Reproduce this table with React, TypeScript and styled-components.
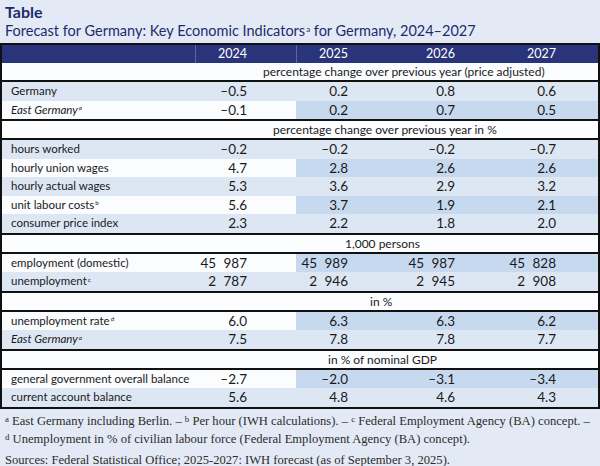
import React from "react";
import styled, { createGlobalStyle } from "styled-components";

const Global = createGlobalStyle`
  html, body { margin: 0; padding: 0; background: #e3eaf5; }
  body { font-family: Lato, "Open Sans", sans-serif; }
`;

const Page = styled.div`
  width: 600px;
  height: 466px;
  box-sizing: border-box;
  background: #e3eaf5;
  overflow: hidden;
`;

const Title = styled.h1`
  margin: 0;
  padding: 3px 0 0 5px;
  font: 700 16px/18px Lato, sans-serif;
  color: #1d2a6c;
`;

const Subtitle = styled.h2`
  margin: 0;
  padding: 1px 0 0 5px;
  font: 400 14.5px/18px Lato, sans-serif;
  color: #1d2a6c;
`;

const Sup = styled.sup`
  font-size: 0.55em;
  line-height: 0;
  vertical-align: 0.55em;
  margin-left: 1px;
`;

const NoteSup = styled.sup`
  font-size: 0.7em;
  line-height: 0;
  vertical-align: 0.35em;
`;

const Table = styled.div`
  margin-top: 3px;
  width: 600px;
  box-sizing: border-box;
  border: 2px solid #111;
`;

const cols = "193px 101px 101px 101px 1fr";

const HeadRow = styled.div`
  display: grid;
  grid-template-columns: ${cols};
  height: 18px;
  background: #2a347a;
  color: #fff;
  font: 400 12.5px/18px Lato, sans-serif;
`;

const HeadCell = styled.div<{ $pad: number; $sep?: boolean }>`
  text-align: right;
  padding-right: ${(p) => p.$pad}px;
  border-left: ${(p) => (p.$sep ? "1px solid #5b659e" : "none")};
`;

const SectionRow = styled.div<{ $indent: number; $top: boolean }>`
  height: 17px;
  background: #fcfdff;
  border-top: ${(p) => (p.$top ? "2px solid #111" : "none")};
  border-bottom: 2px solid #111;
  padding-left: ${(p) => p.$indent}px;
  font: 400 12px/17px Lato, sans-serif;
  color: #1a1a1a;
`;

type Tone = "light" | "dark";

const DataRow = styled.div<{ $tone: Tone }>`
  display: grid;
  grid-template-columns: ${cols};
  height: 18.5px;
  background: ${(p) => (p.$tone === "light" ? "#dde7f4" : "#fbfcfe")};
  color: #1a1a1a;
`;

const LabelCell = styled.div<{ $italic?: boolean }>`
  padding-left: 9px;
  font: ${(p) => (p.$italic ? "italic" : "normal")} 400 11.5px/18.5px Lato, sans-serif;
  white-space: nowrap;
`;

const ValueCell = styled.div<{ $pad: number; $shade: boolean }>`
  text-align: right;
  padding-right: ${(p) => p.$pad}px;
  background: ${(p) => (p.$shade ? "#c6d9ef" : "transparent")};
  font: 400 13.5px/18.5px Lato, sans-serif;
  word-spacing: 4px;
  white-space: nowrap;
`;

const Notes = styled.div`
  padding: 3px 5px 0 5px;
  font-family: "Liberation Serif", "Times New Roman", serif;
  font-size: 12.6px;
  line-height: 18px;
  color: #2b2b2b;
`;

const NoteLine = styled.p`
  margin: 0;
  white-space: nowrap;
`;

const Sources = styled.p`
  margin: 3px 0 0;
  white-space: nowrap;
`;

const years = [
  { y: "2024", pad: 49, forecast: false },
  { y: "2025", pad: 49, forecast: true },
  { y: "2026", pad: 43, forecast: true },
  { y: "2027", pad: 42, forecast: true },
];

type Row = { label: string; sup?: string; italic?: boolean; tone: Tone; v: string[] };
type Section = { title: string; indent: number; rows: Row[] };

const sections: Section[] = [
  {
    title: "percentage change over previous year (price adjusted)",
    indent: 261,
    rows: [
      { label: "Germany", tone: "light", v: ["–0.5", "0.2", "0.8", "0.6"] },
      { label: "East Germany", sup: "a", italic: true, tone: "dark", v: ["–0.1", "0.2", "0.7", "0.5"] },
    ],
  },
  {
    title: "percentage change over previous year in %",
    indent: 271,
    rows: [
      { label: "hours worked", tone: "light", v: ["–0.2", "–0.2", "–0.2", "–0.7"] },
      { label: "hourly union wages", tone: "dark", v: ["4.7", "2.8", "2.6", "2.6"] },
      { label: "hourly actual wages", tone: "light", v: ["5.3", "3.6", "2.9", "3.2"] },
      { label: "unit labour costs", sup: "b", tone: "dark", v: ["5.6", "3.7", "1.9", "2.1"] },
      { label: "consumer price index", tone: "light", v: ["2.3", "2.2", "1.8", "2.0"] },
    ],
  },
  {
    title: "1,000 persons",
    indent: 343,
    rows: [
      { label: "employment (domestic)", tone: "dark", v: ["45 987", "45 989", "45 987", "45 828"] },
      { label: "unemployment", sup: "c", tone: "light", v: ["2 787", "2 946", "2 945", "2 908"] },
    ],
  },
  {
    title: "in %",
    indent: 368,
    rows: [
      { label: "unemployment rate", sup: "d", tone: "dark", v: ["6.0", "6.3", "6.3", "6.2"] },
      { label: "East Germany", sup: "a", italic: true, tone: "light", v: ["7.5", "7.8", "7.8", "7.7"] },
    ],
  },
  {
    title: "in % of nominal GDP",
    indent: 326,
    rows: [
      { label: "general government overall balance", tone: "dark", v: ["–2.7", "–2.0", "–3.1", "–3.4"] },
      { label: "current account balance", tone: "light", v: ["5.6", "4.8", "4.6", "4.3"] },
    ],
  },
];

export default function App() {
  return (
    <Page>
      <Global />
      <Title>Table</Title>
      <Subtitle>
        Forecast for Germany: Key Economic Indicators<Sup>a</Sup> for Germany, 2024–2027
      </Subtitle>
      <Table>
        <HeadRow>
          <div />
          {years.map((c, i) => (
            <HeadCell key={c.y} $pad={c.pad} $sep={i < 2}>
              {c.y}
            </HeadCell>
          ))}
        </HeadRow>
        {sections.map((s, si) => (
          <React.Fragment key={s.title}>
            <SectionRow $indent={s.indent} $top={si > 0}>
              {s.title}
            </SectionRow>
            {s.rows.map((r) => (
              <DataRow key={r.label + r.v[0]} $tone={r.tone}>
                <LabelCell $italic={r.italic}>
                  {r.label}
                  {r.sup && <Sup>{r.sup}</Sup>}
                </LabelCell>
                {r.v.map((val, i) => (
                  <ValueCell
                    key={i}
                    $pad={years[i].pad}
                    $shade={r.tone === "dark" && years[i].forecast}
                  >
                    {val}
                  </ValueCell>
                ))}
              </DataRow>
            ))}
          </React.Fragment>
        ))}
      </Table>
      <Notes>
        <NoteLine>
          <NoteSup>a</NoteSup> East Germany including Berlin. – <NoteSup>b</NoteSup> Per hour (IWH calculations). –{" "}
          <NoteSup>c</NoteSup> Federal Employment Agency (BA) concept. –
        </NoteLine>
        <NoteLine>
          <NoteSup>d</NoteSup> Unemployment in % of civilian labour force (Federal Employment Agency (BA) concept).
        </NoteLine>
        <Sources>Sources: Federal Statistical Office; 2025-2027: IWH forecast (as of September 3, 2025).</Sources>
      </Notes>
    </Page>
  );
}
